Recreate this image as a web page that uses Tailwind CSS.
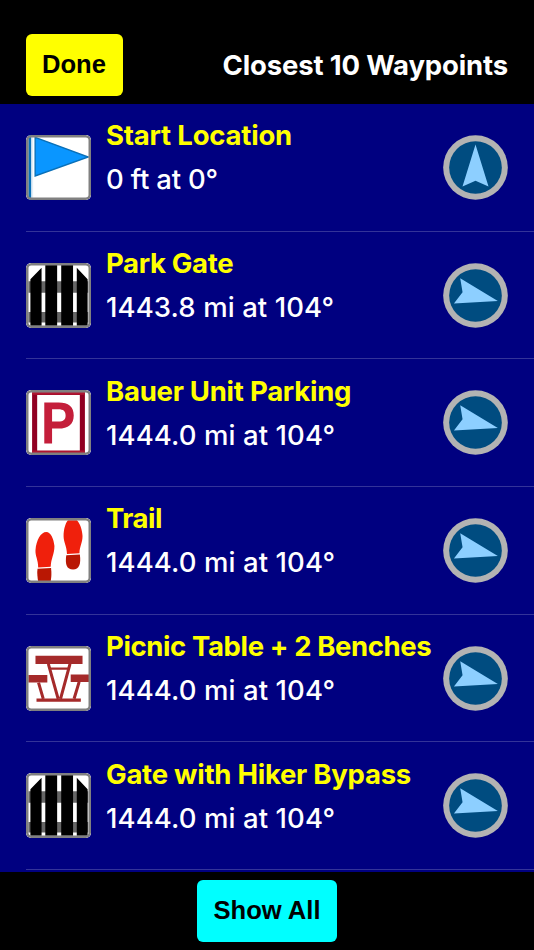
<!DOCTYPE html>
<html lang="en">
<head>
	<meta charset="UTF-8">
	<meta name="viewport" content="width=device-width, initial-scale=1.0">
	<script src="https://cdn.jsdelivr.net/npm/@tailwindcss/browser@4"></script>
	<title>Closest Waypoints</title>
</head>
<body class="bg-black">
	<!-- Icon shapes -->
	<svg class="hidden">
		<symbol id="flag" viewBox="0 0 192 192">
			<rect width="192" height="192" fill="#fff"/>
			<path d="M7 0h9v192H7z" fill="#0a70b8"/>
			<path d="M16 0h5v192h-5z" fill="#e4eef6"/>
			<path d="M27 7L184 65L27 121z" fill="#0a96ff" stroke="#0a70b8" stroke-width="4"/>
		</symbol>
		<symbol id="gate" viewBox="0 0 192 192">
			<rect width="192" height="192" fill="#fff"/>
			<path d="M7 54h177v34H7zM7 145h177v31H7z" fill="#666"/>
			<path d="M13 48L46 14V185H13zM57 6H92V185H57zM104 6H139V185H104zM150 14L182 48V185H150z"/>
		</symbol>
		<symbol id="parking" viewBox="0 0 192 192">
			<rect width="192" height="192" fill="#fff"/>
			<path d="M18 7H174V187H18z" fill="#910022"/>
			<path d="M18 7H174V14H18zM18 179H174V187H18z" fill="#b01530"/>
			<path d="M33 15H159V179H33z" fill="#fff"/>
			<path d="M54 37H96C126 37 141 50 141 75S125 114 96 114H77V158H54zM77 57V93H95C111 93 117 87 117 75S111 57 95 57z" fill="#c41e3a" fill-rule="evenodd"/>
		</symbol>
		<symbol id="trail" viewBox="0 0 192 192">
			<rect width="192" height="192" fill="#fff"/>
			<path d="M60 41C73 41 82 61 84 83C84 108 74 119 73 144L36 146C36 123 27 112 28 95C30 65 44 41 60 41z" fill="#f0200c"/>
			<path d="M34 150L74 148C76 164 75 178 72 192H37C34 178 32 164 34 150z" fill="#b91703"/>
			<path d="M124 7H150C160 16 166 36 167 53C167 74 158 84 158 104L121 106C120 83 111 70 111 54C111 35 116 16 124 7z" fill="#f0200c"/>
			<path d="M119 110L159 108C163 136 157 152 139 152C120 152 115 137 119 110z" fill="#b91703"/>
		</symbol>
		<symbol id="picnic" viewBox="0 0 192 192">
			<rect width="192" height="192" fill="#fff"/>
			<g fill="#a52a2a">
				<path d="M28 29H167V53H28zM7 86H63V108H7zM132 84H187V106H132zM31 155H162V165H31z"/>
			</g>
			<path d="M66 53L95 156M130 53L102 156M37 108L51 156M157 106L142 156" fill="none" stroke="#a52a2a" stroke-width="9"/>
			<path d="M68 67H128" stroke="#a52a2a" stroke-width="7"/>
		</symbol>
		<symbol id="compass" viewBox="-97.5 -97.5 195 195">
			<circle r="97" fill="#b3b3b3"/>
			<circle r="79" fill="#004c80"/>
		</symbol>
		<symbol id="needle" viewBox="-97.5 -97.5 195 195">
			<path d="M0 -69L39 57L0 40L-39 57z" fill="#8dcfff"/>
		</symbol>
	</svg>

	<div class="flex h-[950px] w-[534px] flex-col overflow-hidden bg-black font-['Inter',sans-serif] text-[27.5px] text-white">
		<!-- Header -->
		<header class="flex h-[103.5px] shrink-0 items-end justify-between px-[26px] pb-2">
			<button class="h-[62px] w-[97px] rounded-md bg-[#ffff00] pr-[8px] pb-[1px] pl-[7px] font-['Liberation_Sans',sans-serif] text-[25.6px] font-bold text-black">Done</button>
			<h1 class="flex h-[62px] items-center pt-[2px] font-bold tracking-[-0.15px]">Closest 10 Waypoints</h1>
		</header>

		<!-- Waypoints -->
		<main class="min-h-0 flex-1 overflow-hidden bg-[#000080] pl-[26px] pt-[0.5px]">
			<div class="flex h-[127.67px] items-center border-b border-[#333399] pr-[26px]">
				<svg class="size-[65px] rounded-[5px]"><use href="#flag"/><rect x="1.25" y="1.25" width="62.5" height="62.5" rx="4" fill="none" stroke="#808080" stroke-width="2.5"/></svg>
				<div class="ml-[15px] flex-1 self-start whitespace-nowrap pt-[9px] leading-[44px]">
					<h2 class="font-bold tracking-[-0.2px] text-[#ffff00]">Start Location</h2>
					<p class="font-medium tracking-[-0.2px]">0 ft at 0°</p>
				</div>
				<svg class="mt-[1px] size-[65px]"><use href="#compass"/><use href="#needle"/></svg>
			</div>
			<div class="flex h-[127.67px] items-center border-b border-[#333399] pr-[26px]">
				<svg class="mt-[1px] size-[65px] rounded-[5px]"><use href="#gate"/><rect x="1.25" y="1.25" width="62.5" height="62.5" rx="4" fill="none" stroke="#808080" stroke-width="2.5"/></svg>
				<div class="ml-[15px] flex-1 self-start whitespace-nowrap pt-[9.5px] leading-[44px]">
					<h2 class="font-bold tracking-[-0.35px] text-[#ffff00]">Park Gate</h2>
					<p class="font-medium tracking-[0.1px]">1443.8 mi at 104°</p>
				</div>
				<svg class="mt-[1px] size-[65px]"><use href="#compass"/><use href="#needle" transform="rotate(104 32.5 32.5)"/></svg>
			</div>
			<div class="flex h-[127.67px] items-center border-b border-[#333399] pr-[26px]">
				<svg class="size-[65px] rounded-[5px]"><use href="#parking"/><rect x="1.25" y="1.25" width="62.5" height="62.5" rx="4" fill="none" stroke="#808080" stroke-width="2.5"/></svg>
				<div class="ml-[15px] flex-1 self-start whitespace-nowrap pt-[9.5px] leading-[44px]">
					<h2 class="font-bold tracking-[-0.25px] text-[#ffff00]">Bauer Unit Parking</h2>
					<p class="font-medium tracking-[0.1px]">1444.0 mi at 104°</p>
				</div>
				<svg class="size-[65px]"><use href="#compass"/><use href="#needle" transform="rotate(104 32.5 32.5)"/></svg>
			</div>
			<div class="flex h-[127.67px] items-center border-b border-[#333399] pr-[26px]">
				<svg class="mt-[1px] size-[65px] rounded-[5px]"><use href="#trail"/><rect x="1.25" y="1.25" width="62.5" height="62.5" rx="4" fill="none" stroke="#808080" stroke-width="2.5"/></svg>
				<div class="ml-[15px] flex-1 self-start whitespace-nowrap pt-[9.5px] leading-[44px]">
					<h2 class="font-bold tracking-[-0.5px] text-[#ffff00]">Trail</h2>
					<p class="font-medium tracking-[0.1px]">1444.0 mi at 104°</p>
				</div>
				<svg class="mt-[1px] size-[65px]"><use href="#compass"/><use href="#needle" transform="rotate(104 32.5 32.5)"/></svg>
			</div>
			<div class="flex h-[127.67px] items-center border-b border-[#333399] pr-[26px]">
				<svg class="mt-[1px] size-[65px] shrink-0 rounded-[5px]"><use href="#picnic"/><rect x="1.25" y="1.25" width="62.5" height="62.5" rx="4" fill="none" stroke="#808080" stroke-width="2.5"/></svg>
				<div class="ml-[15px] min-w-0 flex-1 self-start whitespace-nowrap pt-[9.5px] leading-[44px]">
					<h2 class="font-bold tracking-[-0.38px] text-[#ffff00]">Picnic Table + 2 Benches</h2>
					<p class="font-medium tracking-[0.1px]">1444.0 mi at 104°</p>
				</div>
				<svg class="mt-[1px] size-[65px] shrink-0"><use href="#compass"/><use href="#needle" transform="rotate(104 32.5 32.5)"/></svg>
			</div>
			<div class="flex h-[127.67px] items-center border-b border-[#333399] pr-[26px]">
				<svg class="size-[65px] rounded-[5px]"><use href="#gate"/><rect x="1.25" y="1.25" width="62.5" height="62.5" rx="4" fill="none" stroke="#808080" stroke-width="2.5"/></svg>
				<div class="ml-[15px] flex-1 self-start whitespace-nowrap pt-[9.5px] leading-[44px]">
					<h2 class="font-bold tracking-[-0.25px] text-[#ffff00]">Gate with Hiker Bypass</h2>
					<p class="font-medium tracking-[0.1px]">1444.0 mi at 104°</p>
				</div>
				<svg class="size-[65px]"><use href="#compass"/><use href="#needle" transform="rotate(104 32.5 32.5)"/></svg>
			</div>
		</main>

		<!-- Footer -->
		<footer class="flex h-[78px] shrink-0 justify-center pt-2">
			<button class="h-[62px] w-[140px] rounded-md bg-[#00ffff] pb-[1px] font-['Liberation_Sans',sans-serif] text-[25.6px] font-bold text-black">Show All</button>
		</footer>
	</div>
</body>
</html>
